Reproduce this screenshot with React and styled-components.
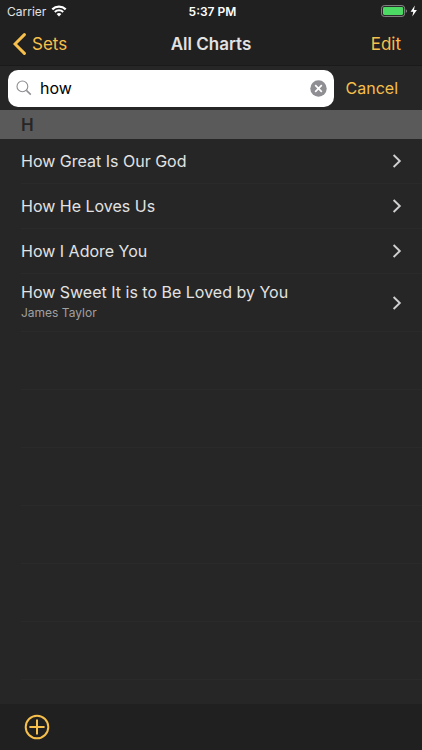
import { React, useState } from "react";
import styled, { createGlobalStyle } from "styled-components";

const charts = [
  { title: "How Great Is Our God" },
  { title: "How He Loves Us" },
  { title: "How I Adore You" },
  { title: "How Sweet It is to Be Loved by You", artist: "James Taylor" },
];

const emptyRows = [1, 2, 3, 4, 5, 6];

function StatusBar() {
  return (
    <Status>
      <div className="carrier">
        <span>Carrier</span>
        <svg width="16" height="12" viewBox="0 0 16 12" fill="none">
          <path d="M1.3 4.4a9.6 9.6 0 0 1 13.4 0" stroke="#fff" strokeWidth="2.2" />
          <path d="M3.8 7a6 6 0 0 1 8.4 0" stroke="#fff" strokeWidth="2" />
          <path d="M8 11.6 5.6 9.1a3.4 3.4 0 0 1 4.8 0z" fill="#fff" />
        </svg>
      </div>
      <time>5:37 PM</time>
      <div className="battery">
        <svg width="37" height="12" viewBox="0 0 37 12">
          <rect
            x="0.6"
            y="0.6"
            width="23"
            height="10.8"
            rx="2.6"
            fill="none"
            stroke="#8a8a8a"
          />
          <rect x="2" y="2" width="20.2" height="8" rx="1.4" fill="#4cd964" />
          <path d="M24.8 4.2c1.6.5 1.6 3.1 0 3.6z" fill="#8a8a8a" />
          <path d="M33.8.6 29.6 6.8h2.7l-1 4.6 4.6-6.4h-2.9z" fill="#fff" />
        </svg>
      </div>
    </Status>
  );
}

function App() {
  const [query, setQuery] = useState("how");

  const results = charts.filter((chart) =>
    chart.title.toLowerCase().includes(query.toLowerCase())
  );

  return (
    <Container>
      <GlobalStyle />
      <StatusBar />
      <NavBar>
        <BarButton type="button">
          <svg width="13" height="22" viewBox="0 0 13 22" fill="none">
            <path
              d="M11.4 1.6 2 11l9.4 9.4"
              stroke="currentColor"
              strokeWidth="3"
              strokeLinecap="round"
              strokeLinejoin="miter"
            />
          </svg>
          Sets
        </BarButton>
        <h1>All Charts</h1>
        <BarButton type="button" $end>
          Edit
        </BarButton>
      </NavBar>

      <SearchBar onSubmit={(e) => e.preventDefault()}>
        <SearchField>
          <svg width="16" height="16" viewBox="0 0 16 16" fill="none">
            <circle cx="6.4" cy="6.4" r="5.4" stroke="#8e8e93" strokeWidth="1.1" />
            <path d="m10.4 10.4 4.4 4.2" stroke="#8e8e93" strokeWidth="1.5" />
          </svg>
          <input
            type="text"
            aria-label="Search charts"
            value={query}
            onChange={(e) => {
              setQuery(e.target.value);
            }}
          />
          <button
            type="button"
            aria-label="Clear search"
            onClick={() => {
              setQuery("");
            }}
          >
            <svg width="17" height="17" viewBox="0 0 17 17">
              <circle cx="8.5" cy="8.5" r="8.2" fill="#8e8e93" />
              <path
                d="m5.2 5.2 6.6 6.6m0-6.6-6.6 6.6"
                stroke="#fff"
                strokeWidth="1.7"
              />
            </svg>
          </button>
        </SearchField>
        <BarButton type="button" $small>
          Cancel
        </BarButton>
      </SearchBar>

      <SectionHeader>H</SectionHeader>
      <ChartList>
        {results.map((chart) => (
          <ChartRow key={chart.title} $tall={Boolean(chart.artist)}>
            <a href="#chart">
              <div>
                <p className="title">{chart.title}</p>
                {chart.artist && <p className="artist">{chart.artist}</p>}
              </div>
              <svg width="10" height="14" viewBox="0 0 10 14" fill="none">
                <path d="M1.6 1 7.8 7l-6.2 6" stroke="#d0d0d2" strokeWidth="1.9" />
              </svg>
            </a>
          </ChartRow>
        ))}
        {emptyRows.map((row) => (
          <ChartRow key={row} $tall aria-hidden="true" />
        ))}
      </ChartList>

      <Toolbar>
        <BarButton type="button" aria-label="Add chart">
          <svg width="26" height="26" viewBox="0 0 26 26" fill="none">
            <circle cx="13" cy="13" r="11.3" stroke="currentColor" strokeWidth="2" />
            <path
              d="M13 5.4v15.2M5.4 13h15.2"
              stroke="currentColor"
              strokeWidth="2"
            />
          </svg>
        </BarButton>
      </Toolbar>
    </Container>
  );
}

export default App;

const GlobalStyle = createGlobalStyle`
  * {
    box-sizing: border-box;
  }

  body {
    margin: 0;
    background-color: #262626;
  }
`;

const Container = styled.div`
  display: flex;
  flex-direction: column;
  height: 100vh;
  background-color: #262626;
  color: #e2e2e2;
  font-family: Inter, "Liberation Sans", sans-serif;
  font-size: 16px;
`;

const Status = styled.div`
  flex: none;
  display: grid;
  grid-template-columns: 1fr auto 1fr;
  align-items: center;
  height: 22px;
  padding: 0 4px 0 7px;
  background-color: #202020;
  color: #ffffff;
  font-size: 12px;

  .carrier {
    display: flex;
    align-items: center;
    gap: 5px;
    color: #e2e2e2;
  }

  time {
    font-weight: 600;
  }

  .battery {
    display: flex;
    justify-content: flex-end;
  }
`;

const NavBar = styled.header`
  flex: none;
  display: grid;
  grid-template-columns: 1fr auto 1fr;
  align-items: center;
  height: 44px;
  padding: 0 13px;
  background-color: #202020;
  border-bottom: 1px solid #1a1a1a;

  h1 {
    margin: 0;
    font-size: 17px;
    font-weight: 600;
  }
`;

const BarButton = styled.button`
  display: flex;
  align-items: center;
  justify-self: ${(props) => (props.$end ? "end" : "start")};
  gap: 6px;
  padding: ${(props) => (props.$end ? "0 8px" : "0")};
  border: none;
  background: none;
  color: #f7bf4b;
  font-family: inherit;
  font-size: ${(props) => (props.$small ? "16px" : "17px")};
  cursor: pointer;
`;

const SearchBar = styled.form`
  flex: none;
  display: flex;
  align-items: center;
  gap: 12px;
  height: 44px;
  padding: 0 24px 0 8px;
`;

const SearchField = styled.div`
  flex: 1;
  min-width: 0;
  display: flex;
  align-items: center;
  gap: 8px;
  height: 37px;
  padding: 0 7px 0 8px;
  border-radius: 10px;
  background-color: #ffffff;

  input {
    flex: 1;
    min-width: 0;
    padding: 0;
    border: none;
    outline: none;
    background: none;
    color: #000000;
    font-family: inherit;
    font-size: 16px;
  }

  button {
    display: flex;
    padding: 0;
    border: none;
    background: none;
    cursor: pointer;
  }
`;

const SectionHeader = styled.h2`
  flex: none;
  margin: 0;
  padding: 2px 21px 0;
  background-color: #5a5a5a;
  color: #262626;
  font-size: 17px;
  font-weight: 600;
  line-height: 27px;
`;

const ChartList = styled.ul`
  flex: 1;
  min-height: 0;
  margin: 0;
  padding: 0;
  overflow: hidden;
  list-style-type: none;
`;

const ChartRow = styled.li`
  height: ${(props) => (props.$tall ? "58px" : "45px")};
  margin-left: 21px;
  border-bottom: 1px solid #2a2a2a;

  a {
    display: flex;
    align-items: center;
    justify-content: space-between;
    height: 100%;
    padding-right: 20px;
    color: inherit;
    text-decoration: none;
  }

  p {
    margin: 0;
  }

  .title {
    line-height: 22px;
  }

  .artist {
    padding-bottom: 2px;
    color: #a0a0a0;
    font-size: 12px;
    line-height: 20px;
  }
`;

const Toolbar = styled.footer`
  flex: none;
  display: flex;
  align-items: center;
  height: 46px;
  padding: 0 24px;
  background-color: #202020;
`;
